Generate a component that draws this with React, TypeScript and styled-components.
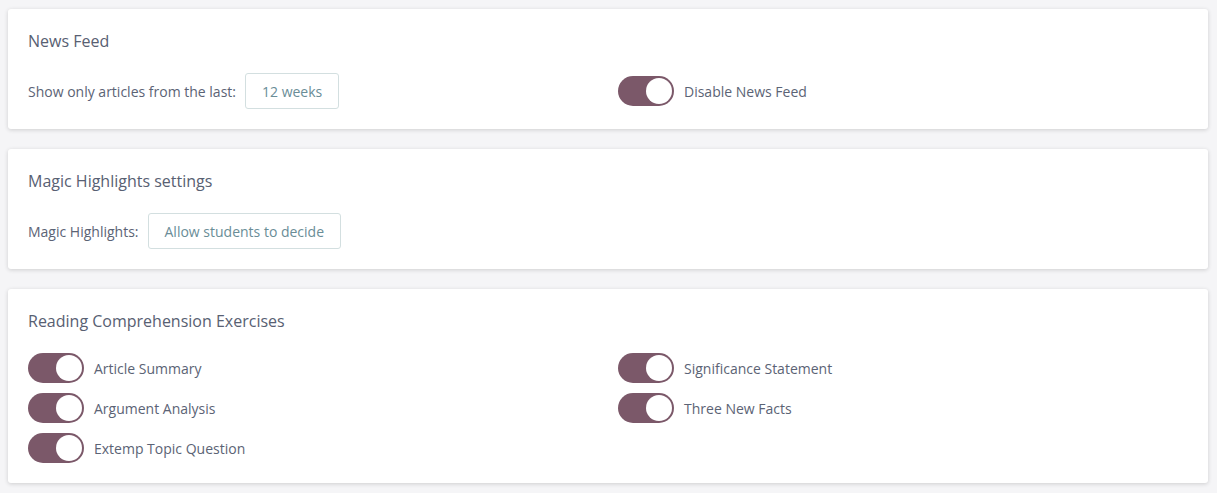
import * as React from "react"
import styled, { createGlobalStyle } from "styled-components"

const GlobalStyle = createGlobalStyle`
  html, body {
    margin: 0;
    padding: 0;
    background: #f5f5f7;
    font-family: "Open Sans", "Liberation Sans", sans-serif;
  }
`

const Page = styled.div`
  display: flex;
  flex-direction: column;
  gap: 20px;
  padding: 9px 9px 9px 8px;
`

const Card = styled.section`
  background: #fff;
  border-radius: 3px;
  box-shadow: 0 1px 4px rgba(0, 0, 0, 0.16);
  padding: 20px;
`

const Title = styled.h2`
  margin: 0 0 20px;
  font-size: 16px;
  line-height: 24px;
  font-weight: 400;
  color: #586072;
`

const Columns = styled.div`
  display: grid;
  grid-template-columns: 1fr 1fr;
  column-gap: 20px;
  row-gap: 10px;
  align-items: center;
`

const Field = styled.div`
  display: flex;
  align-items: center;
  gap: 9px;
`

const Label = styled.span`
  font-size: 14px;
  color: #5b6375;
`

const SelectButton = styled.button`
  height: 36px;
  padding: 0 16px;
  border: 1px solid #d3dfe0;
  border-radius: 3px;
  background: #fff;
  font-family: inherit;
  font-size: 14px;
  color: #6a8d97;
  cursor: pointer;
`

const ToggleRow = styled.label`
  display: flex;
  align-items: center;
  gap: 10px;
  font-size: 14px;
  color: #5b6375;
  cursor: pointer;
`

const Track = styled.span<{ $on: boolean }>`
  position: relative;
  width: 56px;
  height: 30px;
  flex: none;
  border-radius: 15px;
  background: ${p => (p.$on ? "#7b5869" : "#c9cdd4")};
  transition: background 0.2s;
`

const Knob = styled.span<{ $on: boolean }>`
  position: absolute;
  top: 2px;
  left: ${p => (p.$on ? "28px" : "2px")};
  width: 26px;
  height: 26px;
  border-radius: 50%;
  background: #fff;
  transition: left 0.2s;
`

const Toggle = ({ label, initial = true }: { label: string; initial?: boolean }) => {
  const [on, setOn] = React.useState(initial)
  return (
    <ToggleRow onClick={() => setOn(!on)}>
      <Track $on={on}>
        <Knob $on={on} />
      </Track>
      {label}
    </ToggleRow>
  )
}

export default function App() {
  return (
    <>
      <GlobalStyle />
      <Page>
        <Card>
          <Title>News Feed</Title>
          <Columns>
            <Field>
              <Label>Show only articles from the last:</Label>
              <SelectButton>12 weeks</SelectButton>
            </Field>
            <Toggle label="Disable News Feed" />
          </Columns>
        </Card>

        <Card>
          <Title>Magic Highlights settings</Title>
          <Field>
            <Label>Magic Highlights:</Label>
            <SelectButton>Allow students to decide</SelectButton>
          </Field>
        </Card>

        <Card>
          <Title>Reading Comprehension Exercises</Title>
          <Columns>
            <Toggle label="Article Summary" />
            <Toggle label="Significance Statement" />
            <Toggle label="Argument Analysis" />
            <Toggle label="Three New Facts" />
            <Toggle label="Extemp Topic Question" />
          </Columns>
        </Card>
      </Page>
    </>
  )
}
